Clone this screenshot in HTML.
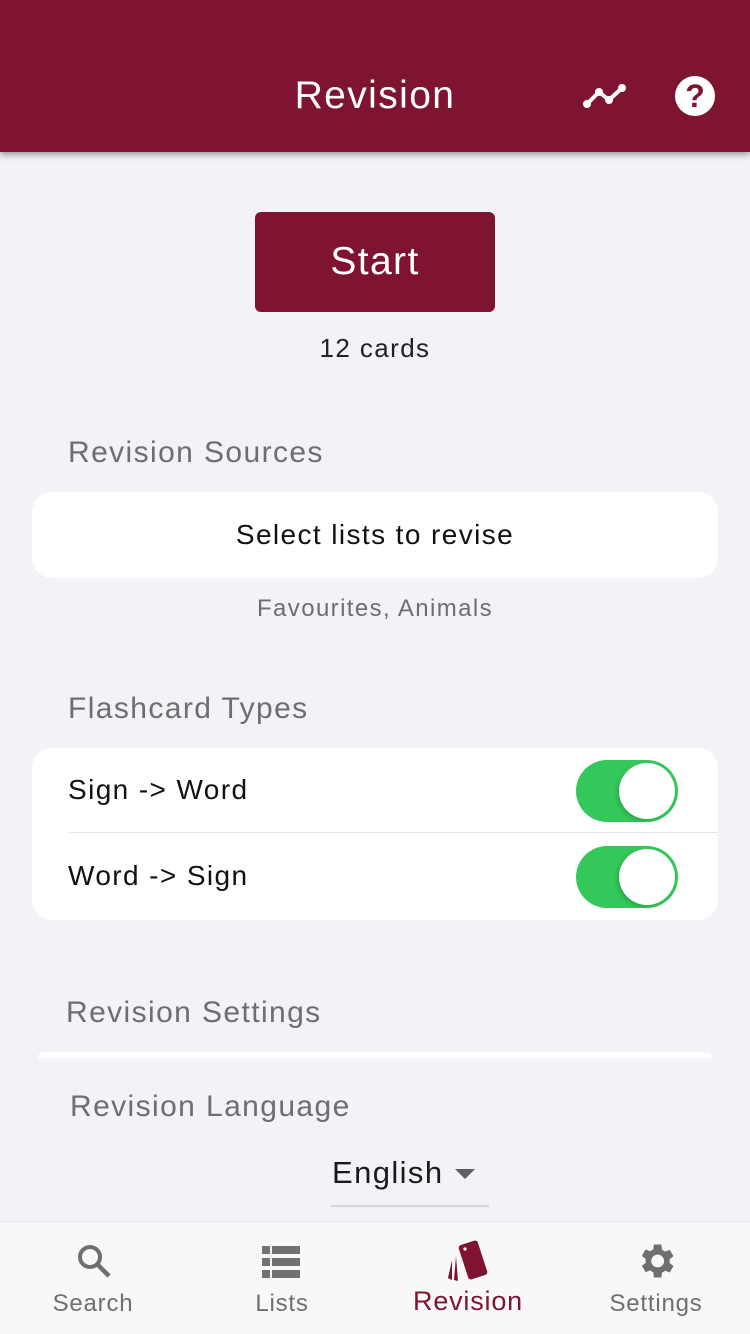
<!DOCTYPE html>
<html><head><meta charset="utf-8"><style>
*{margin:0;padding:0;box-sizing:border-box}
body{width:750px;height:1334px;background:#f2f2f7;font-family:"Liberation Sans",sans-serif;position:relative;overflow:hidden;letter-spacing:1.4px}
.abs{position:absolute}
.hdr{left:0;top:0;width:750px;height:152px;background:#7f1431;box-shadow:0 3px 6px rgba(0,0,0,.35)}
.lbl{color:#6d6d72;font-size:30px;left:68px}
.card{background:#fff;border-radius:20px}
.tog{width:102px;height:62px;border-radius:31px;background:#34c759;left:576px}
.tog::after{content:"";position:absolute;left:43px;top:3px;width:56px;height:56px;border-radius:50%;background:#fff;box-shadow:-2px 2px 4px rgba(0,0,0,.15)}
.tab{font-size:24px;color:#6f6f6f;text-align:center;width:188px;letter-spacing:0.8px}
</style></head><body>
<div class="abs hdr">
<div class="abs" style="left:0;width:750px;top:74px;text-align:center;color:#fff;font-size:39px">Revision</div>
<svg class="abs" style="left:582px;top:82px" width="46" height="28" viewBox="0 0 46 28"><polyline points="5,22 17,10 27,18 40,6" fill="none" stroke="#fff" stroke-width="4" stroke-linejoin="round"/><circle cx="5" cy="22" r="4" fill="#fff"/><circle cx="17" cy="10" r="4" fill="#fff"/><circle cx="27" cy="18" r="4" fill="#fff"/><circle cx="40" cy="6" r="4" fill="#fff"/></svg>
<div class="abs" style="left:675px;top:76px;width:40px;height:40px;border-radius:50%;background:#fff;color:#7f1431;font-weight:bold;font-size:32px;text-align:center;line-height:41px;letter-spacing:0">?</div>
</div>
<div class="abs" style="left:255px;top:212px;width:240px;height:100px;background:#7f1431;border-radius:6px;color:#fff;font-size:39px;text-align:center;line-height:100px">Start</div>
<div class="abs" style="left:0;width:750px;top:333px;text-align:center;font-size:26px;color:#222">12 cards</div>
<div class="abs lbl" style="top:436px">Revision Sources</div>
<div class="abs card" style="left:32px;top:492px;width:686px;height:86px;text-align:center;line-height:86px;font-size:28px;color:#111">Select lists to revise</div>
<div class="abs" style="left:0;width:750px;top:595px;text-align:center;font-size:24px;color:#6d6d72">Favourites, Animals</div>
<div class="abs lbl" style="top:692px">Flashcard Types</div>
<div class="abs card" style="left:32px;top:748px;width:686px;height:172px"></div>
<div class="abs" style="left:68px;top:832px;width:650px;height:1px;background:#e5e5ea"></div>
<div class="abs" style="left:68px;top:774px;font-size:28px;color:#111">Sign -&gt; Word</div>
<div class="abs" style="left:68px;top:860px;font-size:28px;color:#111">Word -&gt; Sign</div>
<div class="abs tog" style="top:760px"></div>
<div class="abs tog" style="top:846px"></div>
<div class="abs lbl" style="top:996px;left:66px">Revision Settings</div>
<div class="abs" style="left:38px;top:1052px;width:674px;height:6px;background:#fff;border-radius:10px 10px 0 0"></div>
<div class="abs lbl" style="top:1090px;left:70px">Revision Language</div>
<div class="abs" style="left:332px;top:1155px;font-size:31px;color:#1a1a1a">English</div>
<svg class="abs" style="left:455px;top:1169px" width="20" height="10"><polygon points="0,0 20,0 10,10" fill="#5f5f5f"/></svg>
<div class="abs" style="left:331px;top:1205px;width:158px;height:2px;background:#d4d4d4"></div>
<div class="abs" style="left:0;top:1221px;width:750px;height:113px;background:#f8f8f8;border-top:1px solid #e8e8ec"></div>
<svg class="abs" style="left:75px;top:1242px" width="38" height="38" viewBox="0 0 38 38"><circle cx="15" cy="15" r="10" fill="none" stroke="#6f6f6f" stroke-width="4"/><line x1="22" y1="22" x2="34" y2="34" stroke="#6f6f6f" stroke-width="4.5"/></svg>
<svg class="abs" style="left:262px;top:1246px" width="38" height="32" viewBox="0 0 38 32"><g fill="#727272"><rect x="0" y="0" width="8" height="8"/><rect x="10" y="0" width="28" height="8"/><rect x="0" y="12" width="8" height="8"/><rect x="10" y="12" width="28" height="8"/><rect x="0" y="24" width="8" height="8"/><rect x="10" y="24" width="28" height="8"/></g></svg>
<svg class="abs" style="left:446px;top:1240px" width="46" height="44" viewBox="0 0 46 44"><path d="M6 20 L2 38 L6 40 Z" fill="#7f1431"/><path d="M10 16 L8 40 L12 41 Z" fill="#7f1431"/><rect x="17" y="2" width="20" height="36" rx="3" transform="rotate(-18 27 20)" fill="#7f1431"/><circle cx="19" cy="9" r="1.6" fill="#fff"/></svg>
<svg class="abs" style="left:634px;top:1239px" width="44" height="44" viewBox="0 0 24 24"><path fill="#6f6f6f" d="M19.4 13a7.5 7.5 0 0 0 0-2l2.1-1.6-2-3.5-2.5 1a7 7 0 0 0-1.7-1L14.9 3h-4l-.4 2.7a7 7 0 0 0-1.7 1l-2.5-1-2 3.5L6.4 11a7.5 7.5 0 0 0 0 2l-2.1 1.6 2 3.5 2.5-1a7 7 0 0 0 1.7 1l.4 2.9h4l.4-2.7a7 7 0 0 0 1.7-1l2.5 1 2-3.5zM12.9 15.5a3.5 3.5 0 1 1 0-7 3.5 3.5 0 0 1 0 7z"/></svg>
<div class="abs tab" style="left:-1px;top:1290px">Search</div>
<div class="abs tab" style="left:188px;top:1290px">Lists</div>
<div class="abs tab" style="left:374px;top:1286px;color:#7f1431;font-size:27px">Revision</div>
<div class="abs tab" style="left:562px;top:1290px">Settings</div>
</body></html>
